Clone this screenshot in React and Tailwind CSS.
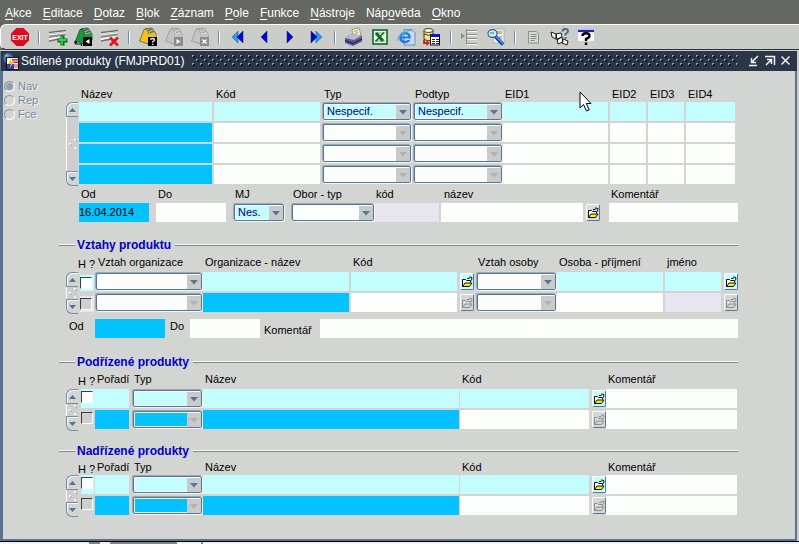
import React from "react";

const CYAN = "bg-[#c3fdfd]";
const BLUE = "bg-[#04c2fd]";
const WHITE = "bg-[#fcfefc]";
const LILAC = "bg-[#e7e6ee]";

/* ---------- toolbar drawings ---------- */

function Icon({ children }) {
  return (
    <svg viewBox="0 0 20 20" className="block h-5 w-5" aria-hidden="true">
      {children}
    </svg>
  );
}

function ExitIcon() {
  return (
    <Icon>
      <path d="M6.500 1h7L19 6.500v7L13.500 19h-7L1 13.500v-7z" fill="#dc0c20" />
      <text x="10" y="12.500" textAnchor="middle" fontSize="7" fontWeight="bold" fill="#fff" fontFamily="Liberation Sans, sans-serif">
        EXIT
      </text>
    </Icon>
  );
}

function Sheet() {
  return (
    <g>
      <path d="M1 5 18 3v6L1 14z" fill="#f7f7f4" />
      <path d="M1 5.500 18 3.500" stroke="#6e6e6e" strokeWidth="1.400" />
      <path d="M1 8.500 18 6.500v2L1 11z" fill="#8e8e8e" />
      <path d="M1 14 11 12" stroke="#6e6e6e" strokeWidth="1.500" />
      <path d="M1 7 18 5" stroke="#c4c4c4" strokeWidth="1" />
    </g>
  );
}

function InsertIcon() {
  return (
    <Icon>
      <Sheet />
      <path d="M12.500 8.500h4v3h3v4h-3v3h-4v-3h-3v-4h3z" fill="#0a6a1c" />
      <path d="M14 9.500v8M10.500 13h8" stroke="#35d050" strokeWidth="1.800" />
    </Icon>
  );
}

function DeleteIcon() {
  return (
    <Icon>
      <Sheet />
      <path d="m10 10.500 8 8M18 10.500l-8 8" stroke="#e01818" strokeWidth="2.600" />
    </Icon>
  );
}

function Folder({ fill, edge, paper }) {
  return (
    <g>
      <path d="M7 2 14 1l4 6v6H9z" fill={paper} stroke={edge} strokeWidth="0.800" />
      <path d="M6 2.500 9 2l3 8-2 7-8.500-3z" fill={fill} stroke={edge} strokeWidth="0.700" />
      <path d="m9 8 8-2 1 4-8 3z" fill={fill} />
      <path d="m10.500 3.500 3-1M12 5.500l3.500-1" stroke={edge} strokeWidth="1.200" />
    </g>
  );
}

function SaveIcon() {
  return (
    <Icon>
      <Folder fill="#159a35" edge="#1b3a20" paper="#9fb8a0" />
      <path d="M1.500 14v3h6v2M1.500 14l-1 2M1.500 14l1.500 2" fill="none" stroke="#111" strokeWidth="1.200" />
      <rect x="9" y="10" width="9" height="9" fill="#000" />
      <path d="M15.500 12v5l-4-2.500z" fill="#fff" />
    </Icon>
  );
}

function QueryIcon() {
  return (
    <Icon>
      <Folder fill="#f5c21a" edge="#5e4b10" paper="#b9b9a8" />
      <rect x="10" y="10" width="9" height="9" fill="#000" />
      <path d="M12.500 12.700q0-1.200 2-1.200t2 1.200q0 1-1.800 2v.8M14.700 16.700v1.300" fill="none" stroke="#fff" strokeWidth="1.300" />
    </Icon>
  );
}

function RunQueryIcon() {
  return (
    <Icon>
      <Folder fill="#c4c4c4" edge="#8d8d8d" paper="#dedede" />
      <rect x="10" y="10" width="9" height="9" fill="#8c8c8c" />
      <path d="M12.500 12v5l4-2.500z" fill="#fff" />
    </Icon>
  );
}

function CancelQueryIcon() {
  return (
    <Icon>
      <Folder fill="#c4c4c4" edge="#8d8d8d" paper="#dedede" />
      <rect x="10" y="10" width="9" height="9" fill="#8c8c8c" />
      <path d="m12.500 12.500 4 4M16.500 12.500l-4 4" stroke="#fff" strokeWidth="1.300" />
    </Icon>
  );
}

function FirstIcon() {
  return (
    <Icon>
      <path d="M10 4v12L4 10z" fill="#2c9ce8" stroke="#16509c" strokeWidth="0.500" />
      <path d="M15 4v12l-6-6z" fill="#0404e0" stroke="#123" strokeWidth="0.500" />
    </Icon>
  );
}

function PrevIcon() {
  return (
    <Icon>
      <path d="M13 4v12l-6-6z" fill="#0404e0" stroke="#123" strokeWidth="0.500" />
    </Icon>
  );
}

function NextIcon() {
  return (
    <Icon>
      <path d="M7 4v12l6-6z" fill="#0404e0" stroke="#123" strokeWidth="0.500" />
    </Icon>
  );
}

function LastIcon() {
  return (
    <Icon>
      <path d="M10 4v12l6-6z" fill="#2c9ce8" stroke="#16509c" strokeWidth="0.500" />
      <path d="M5 4v12l6-6z" fill="#0404e0" stroke="#123" strokeWidth="0.500" />
    </Icon>
  );
}

function PrintIcon() {
  return (
    <Icon>
      <path d="M8 2.500 15 1l2 7-8 1.500z" fill="#fbf6c0" stroke="#6b6a50" strokeWidth="0.600" />
      <path d="m10 4.500 4-1M10.500 6.500l4-1" stroke="#8a8866" strokeWidth="0.800" />
      <path d="M1 11 7 7l11 1.500v6L9 19l-8-3z" fill="#5b5b96" />
      <path d="M1 11 7 7l11 1.500L10 13z" fill="#b9b9dc" />
      <path d="m1 13.500 8 3 9-4.500" fill="none" stroke="#22224a" strokeWidth="1.300" />
      <rect x="14" y="10.500" width="2" height="1.500" fill="#d04040" />
    </Icon>
  );
}

function ExcelIcon() {
  return (
    <Icon>
      <rect x="3" y="3" width="14" height="14" fill="#e9f5e9" stroke="#0d6b22" strokeWidth="1.600" />
      <path d="M5 6h10M5 14h10" stroke="#6fae78" strokeWidth="1" />
      <path d="m6 6 7 8" stroke="#0d6b22" strokeWidth="3" />
      <path d="m14 5.500-8.500 9" stroke="#0d6b22" strokeWidth="1.600" />
    </Icon>
  );
}

function BrowserIcon() {
  return (
    <Icon>
      <path d="M8 2.500h8l3 3V18H8z" fill="#c9dcf2" stroke="#5d7fae" strokeWidth="0.800" />
      <circle cx="9" cy="10.500" r="4.600" fill="none" stroke="#1d7ed8" strokeWidth="2.500" />
      <path d="M5 10.500h8.500" stroke="#1d7ed8" strokeWidth="2" />
      <path d="M10.500 12.200h5" stroke="#c9dcf2" strokeWidth="1.400" />
      <path d="M2 14Q1 10 7 6t9-2" fill="none" stroke="#58aaf0" strokeWidth="1.200" />
    </Icon>
  );
}

function ExportIcon() {
  return (
    <Icon>
      <path d="M2 3.500v9q4.500 2.500 9 0v-9z" fill="#f5ea7c" stroke="#2a2a18" strokeWidth="0.900" />
      <ellipse cx="6.500" cy="3.500" rx="4.500" ry="2" fill="#fffbd0" stroke="#2a2a18" strokeWidth="0.900" />
      <path d="M2 7q4.500 2.500 9 0" fill="none" stroke="#2a2a18" strokeWidth="0.900" />
      <rect x="8.500" y="7.500" width="9" height="10.500" fill="#fff" stroke="#111" />
      <rect x="8.500" y="7" width="9" height="3" fill="#1515c8" />
      <path d="M10 12.500h3M14 12.500h3M10 14.500h3M14 14.500h3M10 16.500h3M14 16.500h3" stroke="#222" strokeWidth="1" />
      <path d="M2 13v3h3" fill="none" stroke="#e01818" strokeWidth="1.800" />
      <path d="m4.500 13 3.500 3-3.500 3z" fill="#e01818" />
    </Icon>
  );
}

function IndentIcon() {
  return (
    <Icon>
      <path d="M7 4.500h10M7 8.500h10M7 12.500h10M7 17.500h10" stroke="#fafafa" strokeWidth="1" />
      <path d="M7 3.500h10M7 7.500h10M7 11.500h10M7 16.500h10M6.500 2v15" stroke="#8c8c8c" strokeWidth="1.200" />
      <path d="M1 6v6l4-3z" fill="#8c8c8c" />
    </Icon>
  );
}

function FindIcon() {
  return (
    <Icon>
      <path d="M8 2h10v14H7z" fill="#ececec" stroke="#a5a5a5" strokeWidth="0.700" />
      <path d="M10 4h6v3h-6zM13 9h3v3h-3z" fill="#b9b9b9" />
      <ellipse cx="6.500" cy="6.500" rx="4.500" ry="3.800" fill="#c5eefb" stroke="#44596c" strokeWidth="1.200" />
      <path d="M4 6h4" stroke="#3a8fb8" strokeWidth="1.200" />
      <path d="m9.500 9.500 7.500 8" stroke="#173a9c" strokeWidth="3.400" />
      <path d="m10 9.500 7 7" stroke="#38a4ee" strokeWidth="1.500" />
    </Icon>
  );
}

function NoteIcon() {
  return (
    <Icon>
      <path d="M4.500 4.500h8l2 2v9.500h-10z" fill="#dadada" stroke="#8f8f8f" />
      <path d="M6.500 7.500h6M6.500 9.500h6M6.500 11.500h6M6.500 13.500h4" stroke="#8a8a8a" />
    </Icon>
  );
}

function HelpKeysIcon() {
  return (
    <Icon>
      <path d="m1 5 5 2v5l-4-2zM6 7l5-1 1 4-5 3zM7 12l5-2 1 5-5 2zM13 12l5 2-1 4-5-2z" fill="#fcfcfc" stroke="#1b1b1b" strokeWidth="1" />
      <path d="M12.500 4.500q0-2.500 2.800-2.500t2.700 2.300Q18 6 15.500 7v1.500M15.500 10v2" fill="none" stroke="#46688e" strokeWidth="1.900" />
    </Icon>
  );
}

function HelpIcon() {
  return (
    <Icon>
      <rect x="2" y="3" width="16" height="11" fill="#f6f6f6" />
      <path d="M2 4h16" stroke="#2222b8" strokeWidth="2.200" />
      <path d="M6.500 9q0-2.800 3.500-2.800t3.500 2.600Q13.500 10.800 10 12v2M10 15.500v2.500" fill="none" stroke="#000" strokeWidth="2.400" />
    </Icon>
  );
}

const toolGroups = [
  [["Konec", ExitIcon]],
  [["Vložit záznam", InsertIcon], ["Uložit", SaveIcon], ["Smazat záznam", DeleteIcon]],
  [["Zadat dotaz", QueryIcon], ["Provést dotaz", RunQueryIcon], ["Zrušit dotaz", CancelQueryIcon]],
  [["První", FirstIcon], ["Předchozí", PrevIcon], ["Další", NextIcon], ["Poslední", LastIcon]],
  [["Tisk", PrintIcon], ["Excel", ExcelIcon], ["Prohlížeč", BrowserIcon], ["Export", ExportIcon]],
  [["Seznam", IndentIcon], ["Hledat", FindIcon]],
  [["Poznámka", NoteIcon], ["Klávesy", HelpKeysIcon], ["Nápověda", HelpIcon]],
];

/* ---------- form controls ---------- */

function Field({ id, label, tone = WHITE, value = "", className = "" }) {
  return (
    <input
      id={id}
      aria-label={id ? undefined : label}
      defaultValue={value}
      className={`block h-[19px] w-full min-w-0 border-0 p-0 text-[11px] leading-[19px] text-black outline-none ${tone} ${className}`}
    />
  );
}

function Combo({ id, label, value = "", tone = WHITE, off = false }) {
  return (
    <div className="relative h-[19px] w-full min-w-0 py-px pl-px">
      <select
        id={id}
        aria-label={id ? undefined : label}
        disabled={off}
        defaultValue={value}
        className={`block h-[17px] w-full appearance-none rounded-[2px] border border-[#5a7697] pl-[3px] text-[11px] leading-[15px] text-[#00007c] opacity-100 shadow-[-1px_-1px_0_#9aa8b8,1px_1px_0_#f4f6f6,inset_0_0_0_1px_#f8fcfc] outline-none ${tone}`}
      >
        <option value={value}>{value}</option>
      </select>
      <span className="pointer-events-none absolute right-px top-[3px] flex h-[14px] w-[14px] items-center justify-center bg-[#c9cbca]">
        <svg viewBox="0 0 8 5" className="mt-px h-[5px] w-2" aria-hidden="true">
          <path d="M0 0h8L4 4.500z" fill={off ? "#aeb0b1" : "#56749a"} />
        </svg>
      </span>
    </div>
  );
}

function Tick({ id, label, off = false }) {
  return (
    <input
      type="checkbox"
      id={id}
      aria-label={id ? undefined : label}
      disabled={off}
      className={`block h-3 w-3 shrink-0 appearance-none border border-b-white border-l-[#3a4048] border-r-white border-t-[#3a4048] ${off ? "bg-[#cfcfcf]" : "bg-[#fcfefc]"}`}
    />
  );
}

function OpenButton({ label, off = false, tone = "bg-[#d9dcda]" }) {
  const line = off ? "#8d8d8d" : "#111";
  return (
    <button
      type="button"
      aria-label={label}
      disabled={off}
      className={`mt-px flex h-[17px] w-[14px] items-center justify-center rounded-[2px] border border-b-[#5a7697] border-l-white border-r-[#5a7697] border-t-white ${off ? "bg-[#d5d7d6]" : tone}`}
    >
      <svg viewBox="0 0 12 12" className="h-3 w-3 shrink-0" aria-hidden="true">
        <path d="M1.500 10.500v-7h3l1 1h4v2" fill={off ? "#dedede" : "#fff"} stroke={line} />
        <path d="M1.500 10.500 4 7h7l-2.500 3.500z" fill={off ? "#d2d2d2" : "#f6ee10"} stroke={line} />
        <path d="M6 2.500h2.500M8 1l3 .5-.5 3" fill="none" stroke={line} />
      </svg>
    </button>
  );
}

function Scroller({ label }) {
  return (
    <div role="group" aria-label={label} className="flex w-[13px] shrink-0 flex-col pr-px">
      <button type="button" aria-label="Nahoru" className="flex h-[15px] items-center justify-center rounded-tl-[6px] border-b border-l border-t border-[#7b8da3] shadow-[inset_1px_1px_0_#f6f6f6]">
        <svg viewBox="0 0 7 4" className="h-1 w-[7px]" aria-hidden="true"><path d="M3.500 0 7 4H0z" fill="#56749a" /></svg>
      </button>
      <div className="flex min-h-0 flex-1 items-center justify-center border-l border-white bg-[#cdcecd]">
        <svg viewBox="0 0 8 10" className="h-[10px] w-2" aria-hidden="true">
          <path d="M5 0h2v2H5zM0 4h2v2H0zM5 8h2v2H5z" fill="#f8f8ff" />
          <path d="M6 1h2v2H6zM1 5h2v2H1z" fill="#a9afb8" opacity=".6" />
        </svg>
      </div>
      <button type="button" aria-label="Dolů" className="flex h-[15px] items-center justify-center rounded-bl-[6px] border-b border-l border-t border-[#7b8da3] shadow-[inset_1px_1px_0_#f6f6f6]">
        <svg viewBox="0 0 7 4" className="h-1 w-[7px]" aria-hidden="true"><path d="M0 0h7L3.500 4z" fill="#56749a" /></svg>
      </button>
    </div>
  );
}

function Heading({ children, className = "" }) {
  return (
    <div className={`flex h-4 items-center ${className}`}>
      <span className="h-0.5 w-4 border-b border-t border-b-[#858585] border-t-[#fafafa]" />
      <h2 className="ml-0.5 mr-1 whitespace-nowrap text-[12px] font-bold leading-4 text-[#0000c4]">{children}</h2>
      <span className="h-0.5 flex-1 border-b border-t border-b-[#858585] border-t-[#fafafa]" />
    </div>
  );
}

function Label({ htmlFor, children, className = "pl-0.5" }) {
  return (
    <label htmlFor={htmlFor} className={`block whitespace-nowrap ${className}`}>
      {children}
    </label>
  );
}

/* ---------- blocks ---------- */

const productCols = "grid grid-cols-[135px_108px_91px_90px_minmax(0,1fr)_38px_38px_50px]";

function Products() {
  const heads = ["Název", "Kód", "Typ", "Podtyp", "EID1", "EID2", "EID3", "EID4"];
  return (
    <section aria-label="Produkty">
      <div className={`${productCols} ml-5 mr-0.5 h-[15px] leading-[15px]`}>
        {heads.map((h) => (
          <Label key={h} htmlFor={`p-${h}`}>{h}</Label>
        ))}
      </div>
      <div className="ml-[7px] mr-0.5 flex">
        <Scroller label="Posun produktů" />
        <div className="flex min-w-0 flex-1 flex-col gap-0.5 pb-0.5">
          {[0, 1, 2, 3].map((r) => {
            const first = r === 0;
            const tone = first ? CYAN : WHITE;
            return (
              <div key={r} className={productCols}>
                {heads.map((h, c) => {
                  const id = first ? `p-${h}` : undefined;
                  const combo = h === "Typ" || h === "Podtyp";
                  return (
                    <div key={h} className={h === "Podtyp" || h === "EID4" ? "pr-px" : "pr-0.5"}>
                      {combo ? (
                        <Combo id={id} label={h} tone={tone} off={!first} value={first ? "Nespecif." : ""} />
                      ) : (
                        <Field id={id} label={h} tone={!first && c === 0 ? BLUE : tone} />
                      )}
                    </div>
                  );
                })}
              </div>
            );
          })}
        </div>
      </div>
      <div className="ml-5 grid grid-cols-[77px_77px_58px_83px_67px_minmax(0,1fr)_23px_129px]">
        <Label htmlFor="od" className="h-[17px] pl-0.5 leading-[17px]">Od</Label>
        <Label htmlFor="do" className="pl-0.5 leading-[17px]">Do</Label>
        <Label htmlFor="mj" className="pl-0.5 leading-[17px]">MJ</Label>
        <Label htmlFor="obor" className="pl-0.5 leading-[17px]">Obor - typ</Label>
        <Label htmlFor="okod" className="pl-0.5 leading-[17px]">kód</Label>
        <Label htmlFor="onazev" className="col-span-2 pl-[3px] leading-[17px]">název</Label>
        <Label htmlFor="okom" className="pl-0.5 leading-[17px]">Komentář</Label>
        <div className="pr-[7px]"><Field id="od" tone={BLUE} value="16.04.2014" /></div>
        <div className="pr-[7px]"><Field id="do" /></div>
        <div className="pr-[7px]"><Combo id="mj" tone={CYAN} value="Nes." /></div>
        <Combo id="obor" />
        <div className="pr-0.5"><Field id="okod" tone={LILAC} /></div>
        <div className="pr-[3px]"><Field id="onazev" /></div>
        <OpenButton label="Vybrat obor" />
        <Field id="okom" />
      </div>
    </section>
  );
}

const relCols = "grid grid-cols-[15px_108px_minmax(0,1fr)_109px_16px_81px_108px_59px_14px]";

function Relations() {
  return (
    <section aria-label="Vztahy produktu">
      <Heading className="mt-[15px]">Vztahy produktu</Heading>
      <div className={`${relCols} ml-[21px] h-[19px] leading-[19px]`}>
        <Label htmlFor="v-h" className="-ml-0.5 pt-0.5">H ?</Label>
        <Label htmlFor="v-org" className="pl-[3px]">Vztah organizace</Label>
        <Label htmlFor="v-nazev">Organizace - název</Label>
        <Label htmlFor="v-kod" className="col-span-2 pl-0.5">Kód</Label>
        <Label htmlFor="v-osoby">Vztah osoby</Label>
        <Label htmlFor="v-osoba">Osoba - příjmení</Label>
        <Label htmlFor="v-jmeno">jméno</Label>
      </div>
      <div className="ml-[7px] flex">
        <Scroller label="Posun vztahů" />
        <div className="ml-px flex min-w-0 flex-1 flex-col gap-0.5 pb-0.5">
          {[true, false].map((on) => {
            const tone = on ? CYAN : WHITE;
            return (
              <div key={String(on)} className={relCols}>
                <div className={`mr-px mt-[3px] flex h-4 items-center ${on ? CYAN : LILAC}`}>
                  <Tick id={on ? "v-h" : undefined} label="H" off={!on} />
                </div>
                <div className="pr-px"><Combo id={on ? "v-org" : undefined} label="Vztah organizace" off={!on} /></div>
                <div className="pr-0.5"><Field id={on ? "v-nazev" : undefined} label="Organizace - název" tone={on ? CYAN : BLUE} /></div>
                <div className="pr-[3px]"><Field id={on ? "v-kod" : undefined} label="Kód" tone={tone} /></div>
                <OpenButton label="Vybrat organizaci" off={!on} tone={CYAN} />
                <div className="pr-px"><Combo id={on ? "v-osoby" : undefined} label="Vztah osoby" off={!on} /></div>
                <div className="pr-0.5"><Field id={on ? "v-osoba" : undefined} label="Osoba" tone={tone} /></div>
                <div className="pr-[3px]"><Field id={on ? "v-jmeno" : undefined} label="jméno" tone={on ? CYAN : LILAC} /></div>
                <OpenButton label="Vybrat osobu" off={!on} tone={CYAN} />
              </div>
            );
          })}
        </div>
      </div>
      <div className="ml-2.5 mt-[5px] grid grid-cols-[26px_75px_20px_74px_56px_minmax(0,1fr)] leading-[15px]">
        <Label htmlFor="v-od" className="">Od</Label>
        <div className="pr-[5px]"><Field id="v-od" tone={BLUE} /></div>
        <Label htmlFor="v-do" className="">Do</Label>
        <div className="pr-1"><Field id="v-do" /></div>
        <Label htmlFor="v-kom" className="pt-1">Komentář</Label>
        <Field id="v-kom" />
      </div>
    </section>
  );
}

const linkCols = "grid grid-cols-[15px_37px_71px_minmax(0,1fr)_132px_14px_131px]";

function Linked({ id, title, className, head, split }) {
  return (
    <section aria-label={title} className={className}>
      <Heading>{title}</Heading>
      <div className={`${linkCols} ml-[21px] mr-px ${head}`}>
        <Label htmlFor={`${id}-h`} className="-ml-0.5 pt-0.5">H ?</Label>
        <Label htmlFor={`${id}-por`}>Pořadí</Label>
        <Label htmlFor={`${id}-typ`}>Typ</Label>
        <Label htmlFor={`${id}-nazev`}>Název</Label>
        <Label htmlFor={`${id}-kod`} className="col-span-2 pl-0.5">Kód</Label>
        <Label htmlFor={`${id}-kom`}>Komentář</Label>
      </div>
      <div className="ml-[7px] mr-px flex">
        <Scroller label={`Posun: ${title}`} />
        <div className="ml-px flex min-w-0 flex-1 flex-col gap-0.5 pb-0.5">
          {[true, false].map((on) => (
            <div key={String(on)} className={linkCols}>
              <div className={`ml-px flex items-start pt-0.5 ${on ? CYAN : ""} ${split ? "mr-px" : ""}`}>
                <Tick id={on ? `${id}-h` : undefined} label="H" off={!on} />
              </div>
              <div className="pr-[3px]"><Field id={on ? `${id}-por` : undefined} label="Pořadí" tone={on ? CYAN : BLUE} /></div>
              <div className="pr-px"><Combo id={on ? `${id}-typ` : undefined} label="Typ" tone={on ? CYAN : BLUE} off={!on} /></div>
              <div className="pr-px"><Field id={on ? `${id}-nazev` : undefined} label="Název" tone={on ? CYAN : BLUE} /></div>
              <div className="pr-[3px]"><Field id={on ? `${id}-kod` : undefined} label="Kód" tone={on ? CYAN : WHITE} /></div>
              <OpenButton label="Vybrat produkt" off={!on} tone={CYAN} />
              <Field id={on ? `${id}-kom` : undefined} label="Komentář" />
            </div>
          ))}
        </div>
      </div>
    </section>
  );
}

/* ---------- page ---------- */

const menu = [
  ["", "A", "kce"],
  ["", "E", "ditace"],
  ["", "D", "otaz"],
  ["", "B", "lok"],
  ["", "Z", "áznam"],
  ["", "P", "ole"],
  ["", "F", "unkce"],
  ["", "N", "ástroje"],
  ["Náp", "o", "věda"],
  ["", "O", "kno"],
];

export default function App() {
  return (
    <div className="flex min-h-screen flex-col bg-[#cbcdca] font-['Liberation_Sans',Arial,sans-serif] text-[11px] text-black">
      <nav className="flex h-6 items-center gap-[11px] bg-[#656763] pl-[5px] pt-0.5 text-[12px] leading-4 text-white">
        {menu.map(([a, u, b]) => (
          <button type="button" key={u + b}>
            {a}
            <span className="underline underline-offset-2">{u}</span>
            {b}
          </button>
        ))}
      </nav>

      <div className="bg-[#656763]">
        <div role="toolbar" aria-label="Nástroje" className="flex h-[26px] items-center rounded-l-[6px] border-b border-l border-t border-b-[#2c323a] border-l-white border-t-white bg-[#cbcdca] pl-1.5">
          {toolGroups.map((group, g) => (
            <React.Fragment key={g}>
              {g > 0 && (
                <span className="flex w-3 justify-center">
                  <span className="h-[13px] w-0.5 border-l border-r border-l-[#7089a8] border-r-white" />
                </span>
              )}
              {group.map(([name, Pic]) => (
                <button type="button" key={name} aria-label={name} className="flex w-[26px] justify-center">
                  <Pic />
                </button>
              ))}
            </React.Fragment>
          ))}
        </div>
      </div>

      <div className="mr-0.5 mt-px flex flex-1 flex-col border-b-2 border-l-[3px] border-r-2 border-[#5a7390]">
        <header className="-mx-0.5 flex h-5 items-center bg-[#2b3648] pl-px pr-[3px] text-white">
          <svg viewBox="0 0 17 17" className="h-[17px] w-[17px] shrink-0" aria-hidden="true">
            <circle cx="6" cy="5" r="5" fill="#3c6db0" />
            <path d="M3 2q3-2 4 1L4 6zM8 4l3 1-2 3z" fill="#7cc47c" />
            <rect x="4.500" y="4.500" width="12" height="12" fill="#fff" stroke="#111" />
            <path d="M10 6h6v4h-6z" fill="#cc2233" />
            <path d="M10 8h6" stroke="#fff" />
            <path d="M5 11h7v5H5z" fill="#2a3fc0" />
            <path d="m9 5-3 6h3l-2 5 5-7H9z" fill="#f6c619" />
            <path d="M12 12h4M12 14h4" stroke="#c33" />
          </svg>
          <h1 className="ml-0.5 whitespace-nowrap text-[12px] leading-5">Sdílené produkty (FMJPRD01)</h1>
          <svg className="ml-2 mr-2 h-3 min-w-0 flex-1" aria-hidden="true">
            <defs>
              <pattern id="knurl" width="8" height="12" patternUnits="userSpaceOnUse">
                <path d="M1 1h2v2H1zM5 5h2v2H5zM1 9h2v2H1z" fill="#0c1420" />
                <path d="M0 0h2v1H1v1H0zM4 4h2v1H5v1H4zM0 8h2v1H1v1H0z" fill="#8fa3b8" />
              </pattern>
            </defs>
            <rect width="100%" height="12" fill="url(#knurl)" />
          </svg>
          {[
            ["Minimalizovat", "M1 10.500h8M10 1 4 7M3.500 3v4.500H8"],
            ["Obnovit", "M1 1.500h9.500V10M2 10l5-5M3 4.500h4.500V9"],
            ["Zavřít", "m1.500 1.500 8 8M9.500 1.500l-8 8"],
          ].map(([name, d]) => (
            <button type="button" key={name} aria-label={name} className="flex w-4 justify-center">
              <svg viewBox="0 0 12 12" className="h-3 w-3" aria-hidden="true">
                <path d={d} fill="none" stroke="#f4f4f4" strokeWidth="1.500" />
              </svg>
            </button>
          ))}
        </header>

        <div className="flex flex-1 bg-[#d3d5d3] pb-5">
          <fieldset className="w-14 shrink-0 pl-px pt-2 text-[#7588a0]">
            {["Nav", "Rep", "Fce"].map((t, i) => (
              <label key={t} className="flex h-3.5 items-center gap-[3px] text-[11px] leading-[14px] [text-shadow:1px_1px_0_#f8f8f8]">
                <input
                  type="radio"
                  name="mode"
                  defaultChecked={i === 0}
                  className="h-[11px] w-[11px] appearance-none rounded-full border border-b-white border-l-[#8b929b] border-r-white border-t-[#8b929b] checked:bg-[#8ea0b4] checked:shadow-[inset_0_0_0_1px_#d3d5d3]"
                />
                {t}
              </label>
            ))}
          </fieldset>
          <main className="mr-[57px] min-w-0 flex-1 pt-4">
            <Products />
            <Relations />
            <Linked id="pod" title="Podřízené produkty" className="mt-4" head="h-[19px] leading-[19px]" />
            <Linked id="nad" title="Nadřízené produkty" className="mt-3" head="h-4 leading-4" split />
          </main>
        </div>
      </div>

      <div className="flex h-[3px] border-t border-black bg-[#f2f2f2] pl-[89px]">
        <span className="w-[11px] bg-[#858585]" />
        <span className="ml-2.5 w-[67px] bg-[#858585]" />
        <span className="ml-6 w-0.5 bg-[#858585]" />
      </div>

      <svg viewBox="0 0 14 22" className="pointer-events-none absolute left-[579px] top-[91px] h-[22px] w-[14px]" aria-hidden="true">
        <path d="M1 1v16l3.500-3.500L7.500 20l2.700-1.200L7.300 12.500H12z" fill="#fff" stroke="#000" strokeWidth="1" />
      </svg>
    </div>
  );
}
